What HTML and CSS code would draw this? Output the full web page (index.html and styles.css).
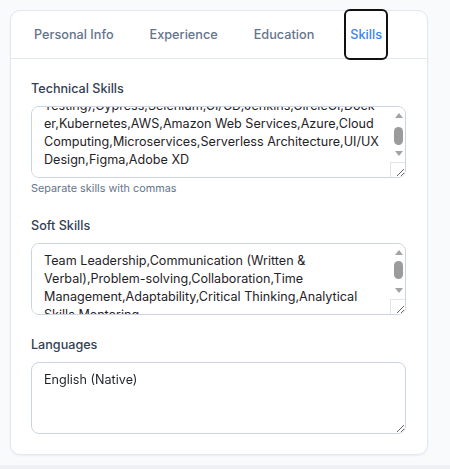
FILE: index.html
```html
<!DOCTYPE html>
<html lang="en">
<head>
<meta charset="utf-8">
<title>Skills</title>
<link rel="stylesheet" href="styles.css">
</head>
<body>
<div class="page">
  <div class="card">
    <div class="tabs">
      <button class="tab">Personal Info</button>
      <button class="tab">Experience</button>
      <button class="tab">Education</button>
      <button class="tab active">Skills</button>
    </div>
    <div class="content">
      <div class="group">
        <label class="label" for="tech">Technical Skills</label>
        <div class="field-wrap">
          <textarea id="tech" class="field has-scroll" rows="3">JavaScript,TypeScript,React,Next.js,Vue.js,Node.js,Express.js,Python,Django,REST APIs,GraphQL,PostgreSQL,MongoDB,Redis,Git,GitHub,Jest,React Testing Library,Unit Testing,E2E Testing (End-to-End Testing),Cypress,Selenium,CI/CD,Jenkins,CircleCI,Docker,Kubernetes,AWS,Amazon Web Services,Azure,Cloud Computing,Microservices,Serverless Architecture,UI/UX Design,Figma,Adobe XD</textarea>
          <div class="scrollbar" aria-hidden="true">
            <div class="sb-btn up"><span class="arrow-up"></span></div>
            <div class="sb-track end"><div class="sb-thumb"></div></div>
            <div class="sb-btn down"><span class="arrow-down"></span></div>
            <div class="sb-corner"></div>
          </div>
        </div>
        <p class="hint">Separate skills with commas</p>
      </div>
      <div class="group">
        <label class="label" for="soft">Soft Skills</label>
        <div class="field-wrap">
          <textarea id="soft" class="field has-scroll" rows="3">Team Leadership,Communication (Written &amp; Verbal),Problem-solving,Collaboration,Time Management,Adaptability,Critical Thinking,Analytical Skills,Mentoring</textarea>
          <div class="scrollbar" aria-hidden="true">
            <div class="sb-btn up"><span class="arrow-up"></span></div>
            <div class="sb-track start"><div class="sb-thumb"></div></div>
            <div class="sb-btn down"><span class="arrow-down"></span></div>
            <div class="sb-corner"></div>
          </div>
        </div>
      </div>
      <div class="group">
        <label class="label" for="lang">Languages</label>
        <div class="field-wrap">
          <textarea id="lang" class="field" rows="3">English (Native)</textarea>
        </div>
      </div>
    </div>
  </div>
</div>
<script src="script.js"></script>
</body>
</html>
```

FILE: styles.css
```css
* { box-sizing: border-box; }
html { background: #eef0f4; }
body {
  margin: 0;
  font-family: Inter, "Noto Sans", sans-serif;
}
.page {
  background: #f8fafc;
  padding: 10px 22px 10px 10px;
}
.card {
  width: 418px;
  background: #ffffff;
  border: 1px solid #e2e8f0;
  border-radius: 10px;
  box-shadow: 0 1px 2px rgba(15, 23, 42, 0.05);
}
.tabs {
  display: flex;
  gap: 28px;
  padding: 0 20px 0 19px;
  border-bottom: 1px solid #e2e8f0;
}
.tab {
  height: 47px;
  padding: 0 4px;
  border: 0;
  background: none;
  font-family: inherit;
  font-size: 12.7px;
  font-weight: 500;
  color: #64748b;
  cursor: pointer;
}
.tab.active {
  color: #3b82f6;
  outline: 2px solid #111111;
  border-radius: 4px;
}
.content {
  display: flex;
  flex-direction: column;
  gap: 20px;
  padding: 20px 21px 20px 20px;
}
.group {
  display: flex;
  flex-direction: column;
}
.label {
  font-size: 12.6px;
  font-weight: 500;
  line-height: 20px;
  color: #334155;
  margin-bottom: 7px;
}
.field-wrap {
  position: relative;
}
.field {
  width: 100%;
  height: 72px;
  padding: 8px 12px;
  border: 1px solid #cbd5e1;
  border-radius: 8px;
  font-family: inherit;
  font-size: 12.6px;
  line-height: 18px;
  color: #1f2328;
  background: #ffffff;
  resize: vertical;
  display: block;
}
.field.has-scroll {
  padding-right: 26px;
}
.scrollbar {
  position: absolute;
  top: 1px;
  right: 1px;
  bottom: 1px;
  width: 15px;
  display: flex;
  flex-direction: column;
  pointer-events: none;
}
.sb-btn {
  height: 15px;
  display: flex;
  justify-content: center;
  padding-left: 2px;
}
.sb-btn.up { align-items: center; padding-top: 1px; }
.sb-btn.down { align-items: flex-start; padding-top: 4px; }
.arrow-up {
  width: 0;
  height: 0;
  border-left: 4px solid transparent;
  border-right: 4px solid transparent;
  border-bottom: 5px solid #a3a3a3;
}
.arrow-down {
  width: 0;
  height: 0;
  border-left: 4px solid transparent;
  border-right: 4px solid transparent;
  border-top: 5px solid #a3a3a3;
}
.sb-track {
  flex: 1;
  display: flex;
  flex-direction: column;
  align-items: center;
  padding-left: 2px;
}
.sb-track.start { justify-content: flex-start; padding-top: 2px; }
.sb-track.end { justify-content: flex-end; padding-bottom: 2px; }
.sb-thumb {
  width: 9px;
  height: 18px;
  border-radius: 5px;
  background: #9b9b9b;
}
.sb-corner {
  height: 15px;
  border-top: 1px solid #e4e4e4;
  border-left: 1px solid #e4e4e4;
}
.hint {
  margin: 2px 0 0;
  font-size: 10.85px;
  line-height: 16px;
  color: #64748b;
}
```

FILE: script.js
```js
var t = document.getElementById('tech');
t.scrollTop = t.scrollHeight;
```
